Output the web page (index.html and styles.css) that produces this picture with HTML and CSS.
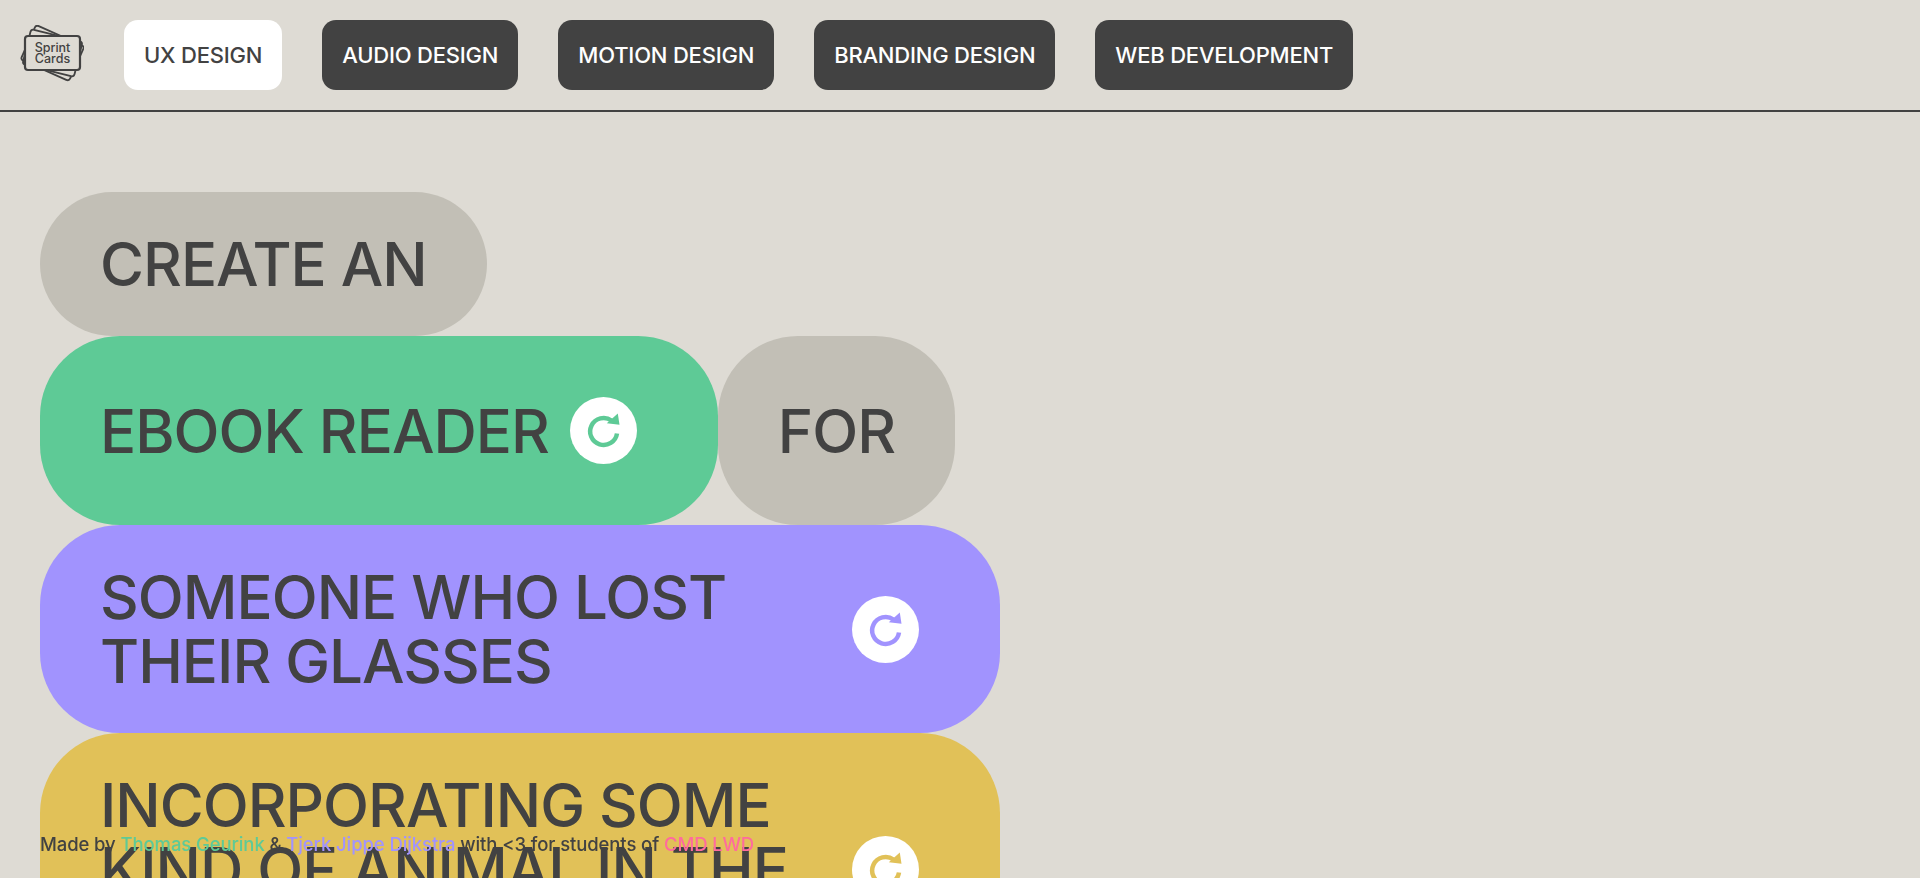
FILE: index.html
```html
<!DOCTYPE html>
<html lang="en">
<head>
  <meta charset="UTF-8" />
  <meta name="viewport" content="width=device-width, initial-scale=1.0"/>
  <title>Sprint Cards</title>
  <link rel="stylesheet" href="styles.css">
</head>
<body>

<nav class="topbar">
  <a class="logo" href="#" aria-label="Sprint Cards">
    <svg viewBox="0 0 64 60" width="64" height="60" fill="none" stroke="#424242" stroke-width="1.8">
      <rect x="6" y="9" width="53" height="38" rx="3" transform="rotate(24 32.5 28)"/>
      <rect x="6" y="10" width="53" height="36" rx="3" transform="rotate(14 32.5 28)" fill="#dedbd4"/>
      <rect x="5" y="11" width="55" height="34" rx="3" fill="#dedbd4" stroke-width="2.2"/>
      <text class="logo-text" x="32.5" y="27" text-anchor="middle">Sprint</text>
      <text class="logo-text" x="32.5" y="37.5" text-anchor="middle">Cards</text>
    </svg>
  </a>
  <a class="tab active" href="#">UX DESIGN</a>
  <a class="tab" href="#">AUDIO DESIGN</a>
  <a class="tab" href="#">MOTION DESIGN</a>
  <a class="tab" href="#">BRANDING DESIGN</a>
  <a class="tab" href="#">WEB DEVELOPMENT</a>
</nav>

<main class="sentence">
  <div class="pill plain">CREATE AN</div>
  <div class="pill green">
    <span>EBOOK READER</span>
    <button class="reroll" aria-label="Shuffle">
      <svg viewBox="0 0 67 67" width="67" height="67"><circle cx="33.5" cy="33.5" r="33.5" fill="#fff"/><path d="M41.5 23.5A13.5 13.5 0 1 0 47 36.5" fill="none" stroke="currentColor" stroke-width="4.5"/><path d="M47.8 16.5l1.7 11.3-12.7-1.6z" fill="currentColor"/></svg>
    </button>
  </div>
  <div class="pill plain">FOR</div>
  <div class="pill purple wide">
    <span>SOMEONE WHO LOST THEIR GLASSES</span>
    <button class="reroll" aria-label="Shuffle">
      <svg viewBox="0 0 67 67" width="67" height="67"><circle cx="33.5" cy="33.5" r="33.5" fill="#fff"/><path d="M41.5 23.5A13.5 13.5 0 1 0 47 36.5" fill="none" stroke="currentColor" stroke-width="4.5"/><path d="M47.8 16.5l1.7 11.3-12.7-1.6z" fill="currentColor"/></svg>
    </button>
  </div>
  <div class="pill yellow wide">
    <span>INCORPORATING SOME KIND OF ANIMAL IN THE DESIGN</span>
    <button class="reroll" aria-label="Shuffle">
      <svg viewBox="0 0 67 67" width="67" height="67"><circle cx="33.5" cy="33.5" r="33.5" fill="#fff"/><path d="M41.5 23.5A13.5 13.5 0 1 0 47 36.5" fill="none" stroke="currentColor" stroke-width="4.5"/><path d="M47.8 16.5l1.7 11.3-12.7-1.6z" fill="currentColor"/></svg>
    </button>
  </div>
</main>

<footer class="credits">
  Made by <a class="c-green" href="#">Thomas Geurink</a> &amp; <a class="c-purple" href="#">Tjerk Jippe Dijkstra</a> with &lt;3 for students of <a class="c-pink" href="#">CMD LWD</a>
</footer>

</body>
</html>
```

FILE: styles.css
```css
* { margin: 0; padding: 0; box-sizing: border-box; }
html, body { height: 100%; overflow: hidden; }
body {
  font-family: 'Inter', 'Liberation Sans', sans-serif;
  background: #dedbd4;
  color: #424242;
}
a { text-decoration: none; color: inherit; }

/* Top bar */
.topbar {
  display: flex;
  align-items: center;
  gap: 40px;
  height: 112px;
  padding: 0 20px;
  border-bottom: 2px solid #424242;
}
.logo { display: flex; width: 64px; }
.logo-text {
  font-family: 'Inter', sans-serif;
  font-size: 12.5px;
  font-weight: 500;
  fill: #424242;
  stroke: none;
}
.tab {
  display: flex;
  align-items: center;
  height: 70px;
  padding: 0 20px;
  border-radius: 14px;
  background: #424242;
  color: #fff;
  font-size: 22px;
  font-weight: 500;
  letter-spacing: -0.2px;
  white-space: nowrap;
}
.tab.active { background: #fff; color: #424242; }

/* Sentence pills */
.sentence {
  display: flex;
  flex-wrap: wrap;
  align-items: stretch;
  width: 960px;
  margin: 80px 0 0 40px;
}
.pill {
  display: flex;
  align-items: center;
  min-height: 144px;
  padding: 40px 60px;
  border-radius: 80px;
  font-size: 60px;
  font-weight: 500;
  line-height: 64px;
  letter-spacing: -1px;
}
.pill.wide { width: 100%; justify-content: space-between; gap: 20px; }
.plain { background: #c2bfb6; }
.green { background: #5eca96; color: #424242; }
.purple { background: #a193fe; }
.yellow { background: #e1c158; }
.reroll {
  display: flex;
  flex: none;
  padding: 21px;
  border: none;
  background: none;
  cursor: pointer;
}
.green .reroll { color: #5eca96; }
.purple .reroll { color: #a193fe; }
.yellow .reroll { color: #e1c158; }

/* Credits stay on top of the pills */
.credits {
  position: fixed;
  left: 40px;
  bottom: 23px;
  font-size: 18.5px;
  font-weight: 500;
  letter-spacing: -0.1px;
}
.c-green { color: #5eca96; }
.c-purple { color: #a193fe; }
.c-pink { color: #ff6b9d; }
```
